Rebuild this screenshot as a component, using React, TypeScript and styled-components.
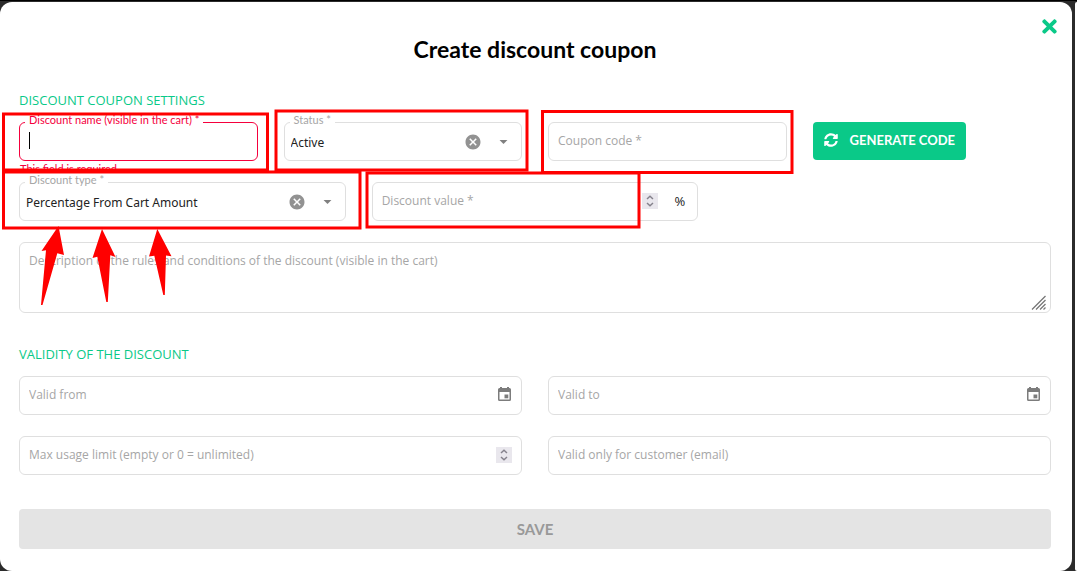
import React, { useState } from 'react';
import styled, { createGlobalStyle, css } from 'styled-components';
import { FaSyncAlt, FaTimes } from 'react-icons/fa';
import { MdArrowDropDown, MdCancel } from 'react-icons/md';

const GREEN = '#0ac988';
const ERROR = '#f5003d';
const BORDER = '#dfdfdf';
const MUTED = '#a6a6a6';
const BODY_FONT = "'Open Sans', 'Noto Sans', sans-serif";
const LABEL_FONT = "Lato, 'Open Sans', sans-serif";

const GlobalStyle = createGlobalStyle`
  *, *::before, *::after { box-sizing: border-box; }
  body {
    margin: 0;
    background: #2b2b2b;
    font-family: ${BODY_FONT};
    overflow: hidden;
  }
  button, input, select, textarea { font: inherit; margin: 0; }
`;

const Backdrop = styled.div`
  position: relative;
  display: flex;
  gap: 3px;
  min-height: 100vh;
  border-top: 1px solid #000;
  padding-top: 1px;
  overflow: hidden;
`;

const Dialog = styled.form`
  position: relative;
  flex: 1;
  min-width: 0;
  padding: 0 21px 22px 19px;
  border-radius: 12px;
  background: #fff;
`;

const NextPanel = styled.div`
  flex: 0 0 2px;
  border-radius: 12px 0 0 12px;
  background: #fff;
`;

const CloseButton = styled.button`
  position: absolute;
  top: 14px;
  right: 12px;
  display: flex;
  padding: 0;
  border: 0;
  background: none;
  color: ${GREEN};
`;

const Title = styled.h1`
  margin: 0;
  padding: 31px 0 25px;
  font: 700 23px/32px ${LABEL_FONT};
  text-align: center;
  color: #000;
`;

const SectionTitle = styled.h2<{ $spaced?: boolean }>`
  margin: 0;
  padding: ${({ $spaced }) => ($spaced ? '31px' : '0')} 0 12px;
  font-size: 13px;
  font-weight: 400;
  line-height: 20px;
  text-transform: uppercase;
  color: ${GREEN};
`;

const Fields = styled.div`
  display: grid;
  gap: 21px;
`;

const Row = styled.div<{ $columns: number }>`
  display: grid;
  grid-template-columns: repeat(${({ $columns }) => $columns}, 1fr);
  column-gap: 26px;
`;

const Field = styled.div<{ $error?: boolean }>`
  position: relative;
  display: flex;
  align-items: center;
  height: 39px;
  border: 1px solid ${({ $error }) => ($error ? ERROR : BORDER)};
  border-radius: 6px;
  background: #fff;
`;

const control = css`
  flex: 1;
  width: 100%;
  min-width: 0;
  border: 0;
  outline: 0;
  background: transparent;
  color: #222;
  font-size: 12px;
  line-height: 18px;
  &::placeholder { color: ${MUTED}; opacity: 1; }
`;

const TextInput = styled.input`
  ${control}
  height: 35px;
  padding: 0 9px 2px;
  appearance: textfield;
  &::-webkit-inner-spin-button { display: none; }
`;

const TextArea = styled.textarea`
  ${control}
  display: block;
  height: 71px;
  padding: 9px;
  border: 1px solid ${BORDER};
  border-radius: 6px;
  resize: none;
`;

const AreaWrap = styled.div`
  position: relative;
`;

const Grip = styled.svg`
  position: absolute;
  right: 5px;
  bottom: 3px;
`;

const Select = styled.select`
  ${control}
  height: 35px;
  padding: 2px 6px 0;
  appearance: none;
  font-family: 'Noto Sans', sans-serif;
`;

const FloatingLabel = styled.label<{ $error?: boolean }>`
  position: absolute;
  top: -11px;
  left: 5px;
  padding: 0 4px;
  background: #fff;
  font: 400 11px/16px ${LABEL_FONT};
  white-space: nowrap;
  color: ${({ $error }) => ($error ? ERROR : MUTED)};
`;

const Caret = styled.span`
  position: absolute;
  left: 9px;
  top: 9px;
  width: 1px;
  height: 17px;
  background: #000;
`;

const HelperText = styled.span`
  position: absolute;
  top: 38px;
  left: 0;
  font: 400 11px/16px ${LABEL_FONT};
  color: ${ERROR};
`;

const IconButton = styled.button<{ $last?: boolean }>`
  display: flex;
  margin-right: ${({ $last }) => ($last ? '9px' : '12px')};
  padding: ${({ $last }) => ($last ? '0 0 2px' : '0')};
  border: 0;
  background: none;
  color: ${({ $last }) => ($last ? '#7c7c7c' : '#929292')};
`;

const DropIcon = styled.span`
  display: flex;
  margin-right: 8px;
  color: #808080;
  pointer-events: none;
`;

const StepperBox = styled.svg`
  flex: none;
  margin: 0 9px 2px 0;
  background: #e9e7ed;
`;

const Unit = styled.span`
  padding: 0 12px 2px 8px;
  font-size: 13px;
  color: #222;
`;

const GenerateButton = styled.button`
  justify-self: start;
  display: flex;
  align-items: center;
  gap: 12px;
  height: 38px;
  padding: 0 11px 2px;
  border: 0;
  border-radius: 4px;
  background: ${GREEN};
  color: #fff;
  font: 700 13px/20px ${LABEL_FONT};
  text-transform: uppercase;
  white-space: nowrap;
`;

const SaveButton = styled.button`
  display: block;
  width: 100%;
  height: 40px;
  margin-top: 34px;
  border: 0;
  border-radius: 4px;
  background: #e4e4e4;
  color: #999;
  font: 700 15px/20px ${LABEL_FONT};
  text-transform: uppercase;
`;

const Markup = styled.svg`
  position: absolute;
  top: -1px;
  left: 0;
  pointer-events: none;
`;

function Stepper() {
  return (
    <StepperBox width="16" height="16" viewBox="0 0 16 16" fill="none" stroke="#85828c" strokeWidth="1.5" aria-hidden>
      <path d="M5 6 L8 3.3 L11 6 M5 10 L8 12.7 L11 10" />
    </StepperBox>
  );
}

function CalendarIcon() {
  return (
    <svg width="15" height="15" viewBox="0 0 15 15" fill="currentColor" aria-hidden>
      <path
        fillRule="evenodd"
        d="M3 1 V0 H5 V1 H10 V0 H12 V1 H12.5 Q14 1 14 2.5 V12.5 Q14 14 12.5 14 H2.5 Q1 14 1 12.5 V2.5 Q1 1 2.5 1 Z M2.5 5 V12.5 H12.5 V5 Z"
      />
      <path d="M7.5 7.5 H11.3 V11.3 H7.5 Z" />
    </svg>
  );
}

function SelectField({ id, label, options }: { id: string; label: string; options: string[] }) {
  const [value, setValue] = useState(options[0]);
  return (
    <Field>
      <FloatingLabel htmlFor={id}>{label}</FloatingLabel>
      <Select id={id} value={value} onChange={(e) => setValue(e.target.value)}>
        {options.map((option) => (
          <option key={option}>{option}</option>
        ))}
      </Select>
      <IconButton type="button" aria-label={`Clear ${label}`}>
        <MdCancel size={18} />
      </IconButton>
      <DropIcon>
        <MdArrowDropDown size={19} />
      </DropIcon>
    </Field>
  );
}

function DateField({ label }: { label: string }) {
  return (
    <Field>
      <TextInput type="text" aria-label={label} placeholder={label} />
      <IconButton type="button" aria-label={`Pick ${label}`} $last>
        <CalendarIcon />
      </IconButton>
    </Field>
  );
}

function Annotations() {
  return (
    <Markup width="1077" height="571" viewBox="0 0 1077 571" aria-hidden>
      <g fill="none" stroke="#f00" strokeWidth="3">
        <rect x="3.5" y="114" width="264" height="56" />
        <rect x="276" y="111" width="251" height="59" />
        <rect x="542.5" y="111.5" width="249.5" height="61" />
        <rect x="3.5" y="172" width="356.5" height="56" />
        <rect x="367" y="173" width="272" height="54" />
      </g>
      <g fill="#f00">
        <path d="M58.5 226 L64 255 L57.3 253.3 L42.5 305 L41 305 L46 250.2 L41.5 251 Z" />
        <path d="M102 229 L115.5 257 L110.3 255.3 L107.8 302 L106.3 302 L97.3 256.7 L92.5 258 Z" />
        <path d="M157.3 229 L171.5 256.3 L166 255.5 L164.8 295 L163.3 295 L154.3 255.7 L149 256.5 Z" />
      </g>
    </Markup>
  );
}

export default function App() {
  return (
    <>
      <GlobalStyle />
      <Backdrop>
        <Dialog onSubmit={(e) => e.preventDefault()}>
          <CloseButton type="button" aria-label="Close">
            <FaTimes size={21} />
          </CloseButton>
          <Title>Create discount coupon</Title>
          <SectionTitle>Discount coupon settings</SectionTitle>
          <Fields>
            <Row $columns={4}>
              <Field $error>
                <FloatingLabel htmlFor="name" $error>
                  Discount name (visible in the cart) *
                </FloatingLabel>
                <TextInput id="name" type="text" aria-invalid aria-describedby="name-help" />
                <Caret />
                <HelperText id="name-help">This field is required</HelperText>
              </Field>
              <SelectField id="status" label="Status *" options={['Active', 'Inactive']} />
              <Field>
                <TextInput type="text" aria-label="Coupon code" placeholder="Coupon code *" />
              </Field>
              <GenerateButton type="button">
                <FaSyncAlt size={14} />
                Generate code
              </GenerateButton>
            </Row>
            <Row $columns={3}>
              <SelectField
                id="type"
                label="Discount type *"
                options={['Percentage From Cart Amount', 'Fixed Amount']}
              />
              <Field>
                <TextInput type="number" aria-label="Discount value" placeholder="Discount value *" />
                <Stepper />
                <Unit>%</Unit>
              </Field>
            </Row>
            <AreaWrap>
              <TextArea
                aria-label="Description"
                placeholder="Description of the rules and conditions of the discount (visible in the cart)"
              />
              <Grip width="15" height="15" viewBox="0 0 15 15" stroke="#777" strokeWidth="1.3" aria-hidden>
                <path d="M1 14.5 L14.5 1 M5 14.5 L14.5 5 M9 14.5 L14.5 9 M12.5 14.5 L14.5 12.5" />
              </Grip>
            </AreaWrap>
          </Fields>
          <SectionTitle $spaced>Validity of the discount</SectionTitle>
          <Fields>
            <Row $columns={2}>
              <DateField label="Valid from" />
              <DateField label="Valid to" />
            </Row>
            <Row $columns={2}>
              <Field>
                <TextInput
                  type="number"
                  aria-label="Max usage limit"
                  placeholder="Max usage limit (empty or 0 = unlimited)"
                />
                <Stepper />
              </Field>
              <Field>
                <TextInput type="email" aria-label="Customer email" placeholder="Valid only for customer (email)" />
              </Field>
            </Row>
          </Fields>
          <SaveButton type="submit" disabled>
            Save
          </SaveButton>
        </Dialog>
        <NextPanel />
        <Annotations />
      </Backdrop>
    </>
  );
}
